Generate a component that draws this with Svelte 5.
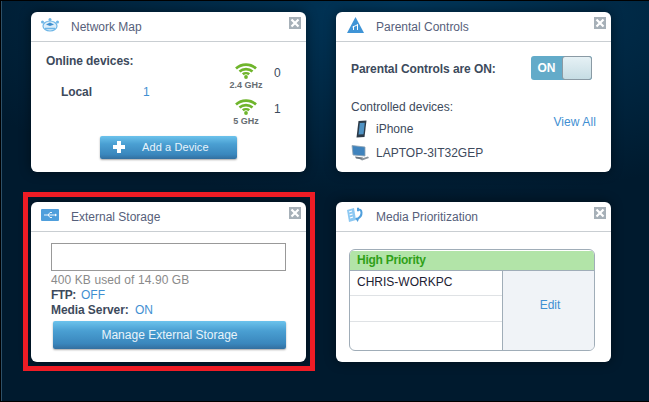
<script>
  let online = { local: 1, bands: [{ label: '2.4 GHz', count: 0 }, { label: '5 GHz', count: 1 }] };
</script>

{#snippet closeBtn()}
  <span class="close" aria-label="Close">
    <svg viewBox="0 0 12 12" width="12" height="12"><path d="M2.500 2.500l7 7M9.500 2.500l-7 7" stroke="#fff" stroke-width="2.200" /></svg>
  </span>
{/snippet}

{#snippet wifi()}
  <svg class="wifi" viewBox="0 0 22 16" width="22" height="16">
    <g fill="none" stroke="#6fb52c" stroke-width="2.600">
      <path d="M1 5.500C6.500 .3 15.500 .3 21 5.500" />
      <path d="M4.500 8.500C8 5.300 14 5.300 17.500 8.500" />
      <path d="M7.800 11.300C9.500 9.800 12.500 9.800 14.200 11.300" />
    </g>
    <circle cx="11" cy="14" r="1.900" fill="#6fb52c" />
  </svg>
{/snippet}

<div class="desktop">
  <section class="card">
    <header>
      <svg class="icon" viewBox="0 0 18 14" width="18" height="14">
        <ellipse cx="9" cy="8" rx="7" ry="5" fill="#dcedf9" stroke="#6db5e6" stroke-width="1.200" />
        <path d="M5 6.500l4-2 4 2-4 1.500z" fill="#3f8fcf" />
        <path d="M4 10.500h10" stroke="#6db5e6" stroke-width="1.500" />
        <circle cx="9" cy="1.500" r="1.500" fill="#6db5e6" />
        <circle cx="1.500" cy="4" r="1.500" fill="#6db5e6" />
        <circle cx="16.500" cy="4" r="1.500" fill="#6db5e6" />
      </svg>
      <h2>Network Map</h2>
      {@render closeBtn()}
    </header>
    <div class="network">
      <div class="network-top">
        <div class="online">
          <strong>Online devices:</strong>
          <div class="local"><strong>Local</strong><span class="link">{online.local}</span></div>
        </div>
        <div class="bands">
          {#each online.bands as band}
            <div class="band">
              <div class="band-label">
                {@render wifi()}
                <small>{band.label}</small>
              </div>
              <span class="count">{band.count}</span>
            </div>
          {/each}
        </div>
      </div>
      <button class="btn add"><span class="plus"></span><span>Add a Device</span></button>
    </div>
  </section>

  <section class="card">
    <header>
      <svg class="icon" viewBox="0 0 18 16" width="18" height="16">
        <path d="M9.500 0L18 16H1z" fill="#3f94d6" />
        <path d="M7.500 13V9M11.500 13V7.500M6.500 10l2.500-1 3-1.500" stroke="#fff" stroke-width="1" fill="none" />
      </svg>
      <h2>Parental Controls</h2>
      {@render closeBtn()}
    </header>
    <div class="parental">
      <div class="parental-top">
        <strong>Parental Controls are ON:</strong>
        <div class="toggle"><span>ON</span><i></i></div>
      </div>
      <div class="devices">
        <div>
          <p>Controlled devices:</p>
          <div class="device first">
            <svg viewBox="-2 0 18 18" width="18" height="18">
              <path d="M5.500 1l8-.5-2 16.500-8 .5z" fill="#2c3a48" />
              <path d="M6.800 3l5-.3-1.300 11.500-5 .3z" fill="#4f93c4" />
            </svg>
            iPhone
          </div>
          <div class="device">
            <svg viewBox="0 0 18 16" width="18" height="16">
              <path d="M1 .5l13 1.500v9L2 10z" fill="#3f83bd" stroke="#8fa3b3" stroke-width=".8" />
              <path d="M4 11.500l8 1-1 2-6-1z" fill="#6d7780" />
              <path d="M9 14l8-2.500 1 1.500-7 2.500z" fill="#8b949c" />
            </svg>
            LAPTOP-3IT32GEP
          </div>
        </div>
        <span class="link view-all">View All</span>
      </div>
    </div>
  </section>

  <section class="card framed">
    <header>
      <svg class="icon" viewBox="0 0 18 12" width="18" height="12">
        <rect width="18" height="12" rx="1" fill="#4f9fdc" />
        <path d="M3 6h11M7 6l2-2.500h2M7 6l2 2.500h2" stroke="#fff" stroke-width=".9" fill="none" />
        <path d="M14 4.500l2 1.500-2 1.500z" fill="#fff" />
      </svg>
      <h2>External Storage</h2>
      {@render closeBtn()}
    </header>
    <div class="storage">
      <div class="bar"></div>
      <p class="used">400 KB used of 14.90 GB</p>
      <p class="line ftp"><strong>FTP:</strong> <span class="link">OFF</span></p>
      <p class="line"><strong>Media Server:</strong> <span class="link">ON</span></p>
      <button class="btn manage">Manage External Storage</button>
    </div>
  </section>

  <section class="card">
    <header>
      <svg class="icon" viewBox="0 0 18 16" width="18" height="16">
        <path d="M1 3l7-2 2 12-7 2z" fill="#8cc8f2" />
        <path d="M3 5l3-1M3.500 8l3-1M4 11l3-1" stroke="#fff" stroke-width="1.200" />
        <path d="M12 2.500c4-1 5.500 6-.5 9.500M10 11l1.500 2 1-2.500M12 .8v3.500" stroke="#4f9fdc" stroke-width="2" fill="none" />
      </svg>
      <h2>Media Prioritization</h2>
      {@render closeBtn()}
    </header>
    <div class="media">
      <div class="priority">
        <div class="priority-head">High Priority</div>
        <div class="priority-body">
          <ul>
            <li>CHRIS-WORKPC</li>
            <li></li>
            <li></li>
          </ul>
          <div class="edit"><span class="link">Edit</span></div>
        </div>
      </div>
    </div>
  </section>
</div>

<style>
  :global(body) {
    margin: 0;
    background: #001a2e;
  }

  .desktop {
    box-sizing: border-box;
    width: 649px;
    height: 402px;
    padding: 11px 38px 0 30px;
    display: grid;
    grid-template-columns: 275px 275px;
    grid-template-rows: 160px 160px;
    gap: 30px;
    font-family: "Liberation Sans", Arial, sans-serif;
    font-size: 12px;
    color: #3d4a5c;
    background:
      radial-gradient(ellipse 500px 200px at 62% 0, #00365a 0, rgba(0, 54, 90, 0) 100%),
      #001a2e;
    border-top: 1px solid #000;
    border-left: 1px solid #000;
    border-bottom: 1px solid #000;
    box-shadow: inset 1px 0 #2d5068;
  }

  .card {
    position: relative;
    background: #fff;
    border-radius: 6px;
    box-shadow: 0 0 12px rgba(0, 0, 0, 0.45);
  }

  .framed::after {
    content: "";
    position: absolute;
    inset: -10px -9px -9px -8px;
    border: 5px solid #ee1c25;
    pointer-events: none;
  }

  header {
    box-sizing: border-box;
    height: 30px;
    display: flex;
    align-items: center;
    border-bottom: 1px solid #c9ced2;
    padding-left: 10px;
    position: relative;
  }

  .icon {
    flex: none;
    margin: -3px 12px 0 0;
  }

  h2 {
    margin: 0;
    font-size: 12px;
    font-weight: normal;
    color: #56607a;
  }

  .close {
    position: absolute;
    top: 5px;
    right: 5px;
    width: 12px;
    height: 12px;
    background: #a6b0b8;
    display: block;
  }

  .close svg {
    display: block;
  }

  strong {
    font-weight: bold;
    letter-spacing: -0.08px;
  }

  .link {
    color: #3f8fd2;
  }

  p {
    margin: 0;
  }

  .btn {
    display: flex;
    align-items: center;
    justify-content: center;
    border: 0;
    border-radius: 2px;
    padding: 0;
    color: #e8f4fb;
    font: 12px "Liberation Sans", Arial, sans-serif;
    background: linear-gradient(#6cc3ec 0, #4a9fd2 35%, #3a87bd 80%, #336f9f 100%);
    box-shadow: 0 1px 2px rgba(0, 0, 0, 0.35);
  }

  /* Network Map */
  .network {
    padding: 12px 15px 0;
  }

  .network-top {
    display: flex;
    justify-content: space-between;
    height: 82px;
  }

  .local {
    display: flex;
    margin: 17px 0 0 15px;
  }

  .local strong {
    width: 82px;
  }

  .bands {
    display: flex;
    flex-direction: column;
    gap: 8px;
    margin: 9px 9px 0 0;
  }

  .band {
    display: flex;
    align-items: center;
    gap: 6px;
  }

  .band-label {
    width: 44px;
    display: flex;
    flex-direction: column;
    align-items: center;
    gap: 1px;
  }

  .band-label small {
    font-size: 9px;
    font-weight: bold;
    color: #666d72;
    line-height: 11px;
  }

  .wifi {
    display: block;
  }

  .count {
    width: 8px;
    margin-top: -8px;
  }

  .add {
    width: 137px;
    height: 23px;
    margin-left: 54px;
    justify-content: flex-start;
    gap: 17px;
    padding: 0 0 2px 13px;
    font-size: 11px;
    letter-spacing: 0.1px;
  }

  .plus {
    width: 12px;
    height: 12px;
    background:
      linear-gradient(#fff, #fff) center / 4px 12px no-repeat,
      linear-gradient(#fff, #fff) center / 12px 4px no-repeat;
  }

  /* Parental Controls */
  .parental {
    padding: 14px 15px 0;
  }

  .parental-top {
    display: flex;
    align-items: center;
    justify-content: space-between;
    padding-right: 4px;
  }

  .parental-top strong {
    margin-top: 2px;
  }

  .toggle {
    box-sizing: border-box;
    width: 61px;
    height: 24px;
    display: flex;
    background: #63abc9;
    border-radius: 3px;
    color: #fff;
    font-weight: bold;
    line-height: 24px;
  }

  .toggle span {
    width: 31px;
    text-align: center;
  }

  .toggle i {
    flex: 1;
    background: linear-gradient(#e6f1f5, #c6dde4);
    border: 1px solid #8a9aa4;
    border-radius: 3px;
  }

  .devices {
    margin-top: 20px;
    display: flex;
    justify-content: space-between;
    align-items: flex-start;
  }

  .device {
    display: flex;
    align-items: center;
    gap: 7px;
    height: 24px;
  }

  .device.first {
    margin-top: 3px;
  }

  .view-all {
    margin-top: 15px;
    letter-spacing: 0.1px;
  }

  /* External Storage */
  .storage {
    padding: 11px 20px 0;
  }

  .bar {
    box-sizing: border-box;
    height: 28px;
    border: 1px solid #999;
  }

  .used {
    color: #8a8a8a;
    margin-top: 2px;
    line-height: 15px;
    letter-spacing: 0.1px;
  }

  .line {
    line-height: 15px;
  }

  .line .link {
    margin-left: 3px;
  }

  .ftp strong {
    letter-spacing: -0.5px;
  }

  .ftp .link {
    margin-left: 2px;
  }

  .manage {
    width: 233px;
    height: 28px;
    margin: 3px 0 0 2px;
  }

  /* Media Prioritization */
  .media {
    padding: 17px 13px 0;
  }

  .priority {
    box-sizing: border-box;
    width: 246px;
    height: 102px;
    border: 1px solid #a0adb8;
    border-radius: 6px;
    overflow: hidden;
  }

  .priority-head {
    box-sizing: border-box;
    height: 20px;
    padding: 0 7px;
    line-height: 18px;
    margin-top: 1px;
    background: #b2e4a8;
    border-bottom: 1px solid #a0adb8;
    color: #2fa018;
    font-weight: bold;
    letter-spacing: -0.25px;
  }

  .priority-body {
    display: flex;
    height: 80px;
  }

  ul {
    margin: 0;
    padding: 0;
    list-style: none;
    width: 152px;
  }

  li {
    box-sizing: border-box;
    height: 26px;
    padding: 4px 7px;
    color: #1d2233;
    border-bottom: 1px solid #dfe2e5;
  }

  li:first-child {
    height: 25px;
  }

  li:last-child {
    border-bottom: 0;
  }

  .edit {
    flex: 1;
    display: flex;
    align-items: center;
    justify-content: center;
    padding: 0 0 12px 3px;
    background: #f0f3f7;
    border-left: 1px solid #a0adb8;
  }
</style>
